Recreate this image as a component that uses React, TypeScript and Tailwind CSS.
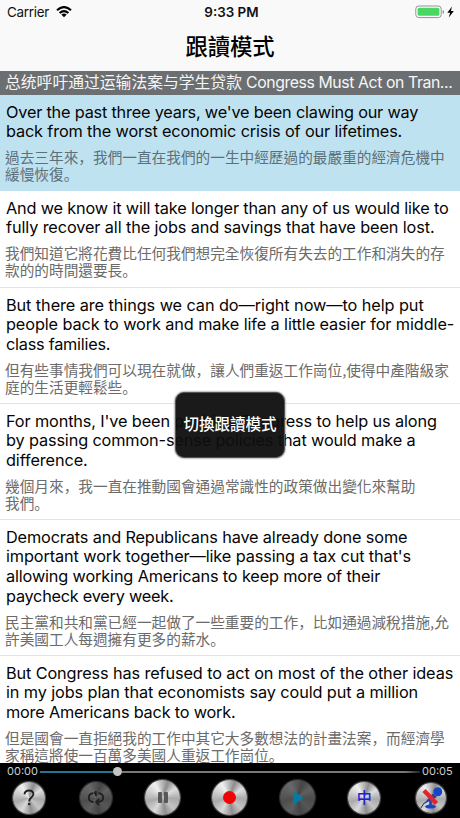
import React from 'react';

type Line = [text: string, tracking: string];
type Row = { en: Line[]; zh: string[]; active?: boolean; height: string };

const rows: Row[] = [
  {
    active: true,
    height: 'h-[96px]',
    en: [
      ["Over the past three years, we've been clawing our way", 'tracking-[-0.2px]'],
      ['back from the worst economic crisis of our lifetimes.', 'tracking-[-0.15px]'],
    ],
    zh: ['過去三年來，我們一直在我們的一生中經歷過的最嚴重的經濟危機中', '緩慢恢復。'],
  },
  {
    height: 'h-[97px]',
    en: [
      ['And we know it will take longer than any of us would like to', 'tracking-[-0.17px]'],
      ['fully recover all the jobs and savings that have been lost.', 'tracking-[-0.12px]'],
    ],
    zh: ['我們知道它將花費比任何我們想完全恢復所有失去的工作和消失的存', '款的的時間還要長。'],
  },
  {
    height: 'h-[116px]',
    en: [
      ['But there are things we can do—right now—to help put', 'tracking-[-0.08px]'],
      ['people back to work and make life a little easier for middle-', 'tracking-[-0.11px]'],
      ['class families.', 'tracking-[-0.25px]'],
    ],
    zh: ['但有些事情我們可以現在就做，讓人們重返工作崗位,使得中產階級家', '庭的生活更輕鬆些。'],
  },
  {
    height: 'h-[116px]',
    en: [
      ["For months, I've been pushing Congress to help us along", 'tracking-[-0.13px]'],
      ['by passing common-sense policies that would make a', 'tracking-[-0.14px]'],
      ['difference.', 'tracking-[-0.1px]'],
    ],
    zh: ['幾個月來，我一直在推動國會通過常識性的政策做出變化來幫助', '我們。'],
  },
  {
    height: 'h-[136px]',
    en: [
      ['Democrats and Republicans have already done some', 'tracking-[-0.15px]'],
      ["important work together—like passing a tax cut that's", 'tracking-[-0.11px]'],
      ['allowing working Americans to keep more of their', 'tracking-[-0.15px]'],
      ['paycheck every week.', 'tracking-[-0.25px]'],
    ],
    zh: ['民主黨和共和黨已經一起做了一些重要的工作，比如通過減稅措施,允', '許美國工人每週擁有更多的薪水。'],
  },
  {
    height: 'h-[120px]',
    en: [
      ['But Congress has refused to act on most of the other ideas', 'tracking-[-0.12px]'],
      ['in my jobs plan that economists say could put a million', 'tracking-[-0.11px]'],
      ['more Americans back to work.', 'tracking-[-0.2px]'],
    ],
    zh: ['但是國會一直拒絕我的工作中其它大多數想法的計畫法案，而經濟學', '家稱這將使一百萬多美國人重返工作崗位。'],
  },
];

// Full-width punctuation sits at the lower left of its cell.
function Chinese({ text }: { text: string }) {
  return (
    <p className="h-[17px] whitespace-nowrap">
      {text.split(/([，。])/).map((part, i) =>
        /^[，。]$/.test(part) ? (
          <span key={i} lang="zh-CN" className="font-['Noto_Sans_CJK_SC',sans-serif]">{part}</span>
        ) : (
          part
        ),
      )}
    </p>
  );
}

function Sentence({ row }: { row: Row }) {
  return (
    <li className={`shrink-0 border-b pt-[7.5px] ${row.height} ${row.active ? 'border-[#bfe2f0] bg-[#bfe2f0]' : 'border-[#e3e3e5] bg-white'}`}>
      <div className="pl-[6px] text-[16.3px] leading-[19.8px] text-[#050505]">
        {row.en.map(([line, tracking]) => (
          <p key={line} className={`whitespace-nowrap ${tracking}`}>{line}</p>
        ))}
      </div>
      <div className={`pl-[5px] pt-[5.9px] font-['Noto_Sans_CJK_TC',sans-serif] text-[14.67px] leading-[17px] ${row.active ? 'text-[#5b7079]' : 'text-[#6b6b6b]'}`}>
        {row.zh.map((line) => (
          <Chinese key={line} text={line} />
        ))}
      </div>
    </li>
  );
}

const bright =
  'bg-[conic-gradient(from_20deg,#8d8d8d,#dedede_35deg,#a9a9a9_75deg,#c4c4c4_115deg,#8f8f8f_150deg,#d9d9d9_190deg,#aaaaaa_235deg,#dadada_285deg,#f0f0f0_310deg,#8d8d8d)]';
const dim =
  'bg-[conic-gradient(from_20deg,#454545,#606060_35deg,#4c4c4c_75deg,#565656_115deg,#454545_150deg,#5e5e5e_190deg,#4d4d4d_235deg,#606060_285deg,#686868_310deg,#454545)]';

function Knob({ size = 'size-8', off, children }: { size?: string; off?: boolean; children: React.ReactNode }) {
  return (
    <div className="flex flex-1 items-center justify-center">
      <button className={`flex items-center justify-center rounded-full ${size} ${off ? dim : bright} ${off ? 'shadow-[0_0_1px_1px_#333]' : 'shadow-[0_0_1px_1px_#555]'}`}>
        {children}
      </button>
    </div>
  );
}

export default function App() {
  return (
    <div className="flex h-[818px] w-[460px] flex-col overflow-hidden bg-white font-[Inter,'Noto_Sans_CJK_TC',sans-serif]">
      <header className="h-[71px] shrink-0 bg-[#f9f9f9]">
        <div className="grid h-6 grid-cols-3 items-center text-[13.4px] leading-6 text-[#111]">
          <div className="flex items-center gap-[7px] pl-[7px]">
            <span className="tracking-[-0.25px]">Carrier</span>
            <svg width="16" height="12" viewBox="0 0 16 12" fill="none" stroke="#000" strokeWidth="2.2">
              <path d="M1 4.2Q8-2 15 4.2M3.6 7Q8 3.1 12.4 7" />
              <path d="M8 11.2 5.3 8.6Q8 6.5 10.7 8.6Z" fill="#000" stroke="none" />
            </svg>
          </div>
          <div className="pl-[3px] text-center font-semibold">9:33 PM</div>
          <div className="flex items-center justify-end pr-[5px]">
            <svg width="40" height="14" viewBox="0 0 40 14">
              <rect x=".8" y="1" width="25.4" height="11.6" rx="3" fill="#fff" stroke="#929292" />
              <rect x="2.6" y="2.8" width="21.8" height="8" rx="1.5" fill="#48d760" />
              <path d="M27.6 5v3.8q1.5-.5 1.5-1.9T27.6 5Z" fill="#929292" />
              <path d="M37 1.5 32.3 7.7h2.8L33.8 12.6 38.8 6h-2.9Z" fill="#000" />
            </svg>
          </div>
        </div>
        <h1 className="text-center text-[22.3px] font-medium leading-[46px] text-black">跟讀模式</h1>
      </header>

      <div className="h-6 shrink-0 whitespace-nowrap bg-[#6b6f72] pl-[5px] text-[15.8px] leading-6 text-[#f6f6f6] font-[Inter,'Noto_Sans_CJK_SC',sans-serif]">
        总统呼吁通过运输法案与学生贷款<span className="tracking-[-0.4px]"> Congress Must Act on Tran...</span>
      </div>

      <main className="relative min-h-0 flex-1 overflow-hidden">
        <ul className="flex flex-col">
          {rows.map((row) => (
            <Sentence key={row.en[0][0]} row={row} />
          ))}
        </ul>
        <div className="absolute left-[175px] top-[297px] flex h-[66px] w-[110px] items-center justify-center rounded-[9px] border border-[#555] bg-[#0e0e0e]/95 text-[15.5px] font-medium text-white shadow-[0_0_2px_#333]">
          切換跟讀模式
        </div>
      </main>

      <footer className="flex h-[55px] shrink-0 flex-col bg-black">
        <div className="flex h-[17px] items-center px-[7px] text-[11px] leading-[17px] text-[#c9d0d3]">
          <span className="w-[33px]">00:00</span>
          <div className="flex flex-1 items-center">
            <div className="h-[2px] w-[73px] bg-[#28718a]" />
            <div className="size-[9px] rounded-full bg-[#c4c4c4]" />
            <div className="h-[2px] flex-1 bg-[linear-gradient(90deg,#777_95%,#222)]" />
          </div>
          <span className="w-[33px] pl-[2px]">00:05</span>
        </div>
        <div className="-mx-[5px] flex h-[35px] items-center">
          <Knob>
            <svg width="12" height="17" viewBox="0 0 12 17" fill="none" stroke="#222" strokeWidth="1.9">
              <path d="M1.5 5.4Q1.7 1.5 6 1.5t4.4 3.7c0 3-4.2 3.2-4.2 7" />
              <path d="M6.2 14v2.2" strokeWidth="2.2" />
            </svg>
          </Knob>
          <Knob off>
            <svg className="shrink-0" width="18" height="16" viewBox="0 0 18 16" fill="none" stroke="#202020" strokeWidth="1.8">
              <path d="M6.3 3.2C3.4 3.6 1.8 5.2 1.8 7.6s1.7 4.3 4.9 4.5M11.5 3.2c3 .4 4.7 2 4.7 4.4s-1.8 4.3-5.4 4.5" />
              <path d="M8.8 1v5M6.8 3.2H8.8M12.2 9 9.2 12.1l3 3" />
            </svg>
          </Knob>
          <Knob size="size-[35px]">
            <svg width="10" height="11" viewBox="0 0 10 11" fill="#575757" stroke="#444" strokeWidth=".7">
              <path d="M.5.5h3v10h-3zM6.5.5h3v10h-3z" />
            </svg>
          </Knob>
          <Knob size="size-[35px]">
            <div className="size-[13px] rounded-full bg-[#ee0505]" />
          </Knob>
          <Knob off size="size-[35px]">
            <svg className="ml-[3px] shrink-0" width="11" height="14" viewBox="0 0 11 14">
              <polygon points="0.5,0 10.5,7 0.5,14" fill="#057ba3" />
            </svg>
          </Knob>
          <Knob>
            <span className="text-[15px] font-medium leading-none text-[#2020dc]">中</span>
          </Knob>
          <Knob size="size-[30px]">
            <svg className="shrink-0" width="24" height="24" viewBox="0 0 24 24" fill="none">
              <path d="m1.5 22.5 4-6" stroke="#333" />
              <path d="m4 18.5 10-11 4 3.5Z" fill="#173fae" />
              <circle cx="18.8" cy="5.8" r="4.5" fill="#1446c5" />
              <path d="M11.5 14v6" stroke="#173fae" strokeWidth="2.5" />
              <ellipse cx="11.5" cy="20.6" rx="5.5" ry="2" fill="#1446c5" />
              <path d="m5 4.5 12.5 13" stroke="#df2530" strokeWidth="4.6" />
            </svg>
          </Knob>
        </div>
      </footer>
    </div>
  );
}
